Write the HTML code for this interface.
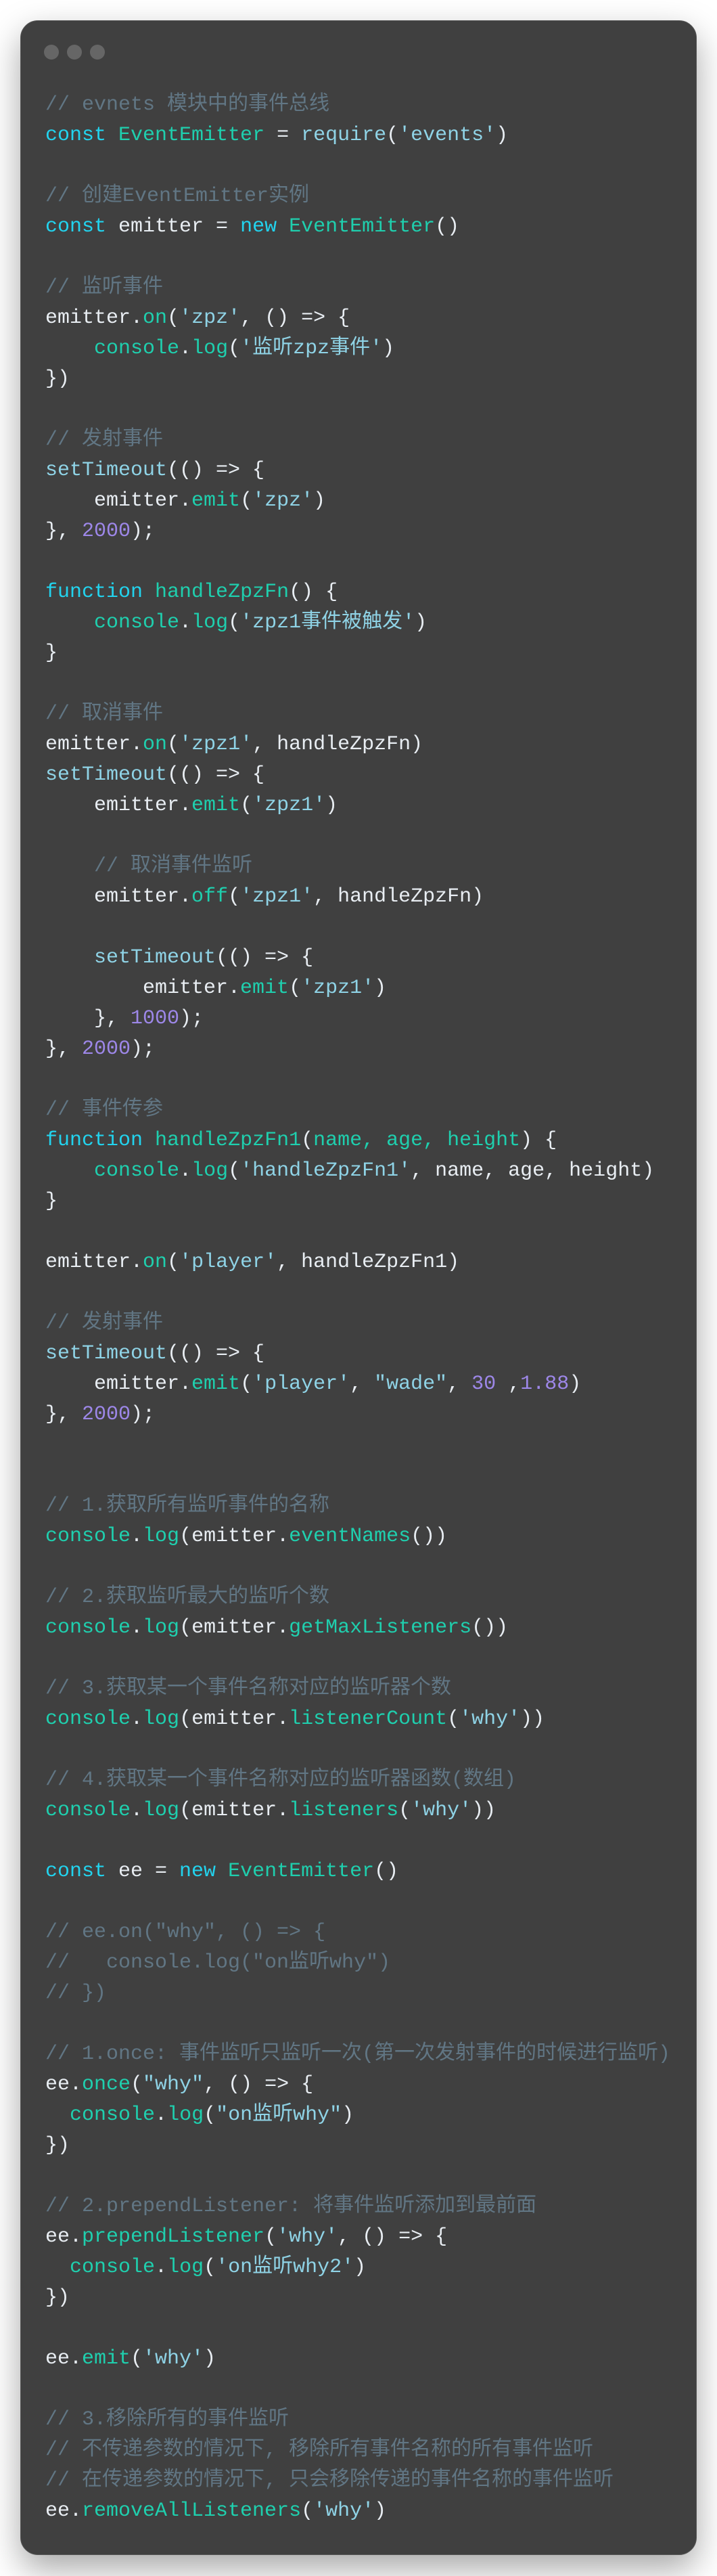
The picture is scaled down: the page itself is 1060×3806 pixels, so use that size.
<!DOCTYPE html>
<html><head><meta charset="utf-8"><style>
html,body{margin:0;padding:0;background:#fff;}
body{width:1060px;height:3806px;position:relative;overflow:hidden;}
.card{position:absolute;left:30px;top:30px;width:998px;height:3743px;background:#404040;border:1px solid #555;border-radius:26px;box-shadow:0 20px 50px rgba(0,0,0,0.35);}
.dot{position:absolute;top:35px;width:22px;height:22px;border-radius:50%;background:#666;}
pre{position:absolute;left:36px;top:102px;margin:0;font-family:"Liberation Mono","Noto Sans CJK SC",monospace;font-size:30px;line-height:45px;color:#e8edf2;white-space:pre;}
.c{color:#617684}.k{color:#22d3ee}.f{color:#1fcfae}.s{color:#8fd3e6}.n{color:#9d87e8}
</style></head><body>
<div class="card">
<div class="dot" style="left:34px"></div><div class="dot" style="left:68px"></div><div class="dot" style="left:102px"></div>
<pre><span class="c">// evnets 模块中的事件总线</span>
<span class="k">const</span> <span class="f">EventEmitter</span> = <span class="s">require</span>(<span class="s">'events'</span>)

<span class="c">// 创建EventEmitter实例</span>
<span class="k">const</span> emitter = <span class="k">new</span> <span class="f">EventEmitter</span>()

<span class="c">// 监听事件</span>
emitter.<span class="f">on</span>(<span class="s">'zpz'</span>, () =&gt; {
    <span class="f">console</span>.<span class="f">log</span>(<span class="s">'监听zpz事件'</span>)
})

<span class="c">// 发射事件</span>
<span class="s">setTimeout</span>(() =&gt; {
    emitter.<span class="f">emit</span>(<span class="s">'zpz'</span>)
}, <span class="n">2000</span>);

<span class="k">function</span> <span class="f">handleZpzFn</span>() {
    <span class="f">console</span>.<span class="f">log</span>(<span class="s">'zpz1事件被触发'</span>)
}

<span class="c">// 取消事件</span>
emitter.<span class="f">on</span>(<span class="s">'zpz1'</span>, handleZpzFn)
<span class="s">setTimeout</span>(() =&gt; {
    emitter.<span class="f">emit</span>(<span class="s">'zpz1'</span>)

    <span class="c">// 取消事件监听</span>
    emitter.<span class="f">off</span>(<span class="s">'zpz1'</span>, handleZpzFn)

    <span class="s">setTimeout</span>(() =&gt; {
        emitter.<span class="f">emit</span>(<span class="s">'zpz1'</span>)
    }, <span class="n">1000</span>);
}, <span class="n">2000</span>);

<span class="c">// 事件传参</span>
<span class="k">function</span> <span class="f">handleZpzFn1</span>(<span class="f">name, age, height</span>) {
    <span class="f">console</span>.<span class="f">log</span>(<span class="s">'handleZpzFn1'</span>, name, age, height)
}

emitter.<span class="f">on</span>(<span class="s">'player'</span>, handleZpzFn1)

<span class="c">// 发射事件</span>
<span class="s">setTimeout</span>(() =&gt; {
    emitter.<span class="f">emit</span>(<span class="s">'player'</span>, <span class="s">"wade"</span>, <span class="n">30</span> ,<span class="n">1.88</span>)
}, <span class="n">2000</span>);


<span class="c">// 1.获取所有监听事件的名称</span>
<span class="f">console</span>.<span class="f">log</span>(emitter.<span class="f">eventNames</span>())

<span class="c">// 2.获取监听最大的监听个数</span>
<span class="f">console</span>.<span class="f">log</span>(emitter.<span class="f">getMaxListeners</span>())

<span class="c">// 3.获取某一个事件名称对应的监听器个数</span>
<span class="f">console</span>.<span class="f">log</span>(emitter.<span class="f">listenerCount</span>(<span class="s">'why'</span>))

<span class="c">// 4.获取某一个事件名称对应的监听器函数(数组)</span>
<span class="f">console</span>.<span class="f">log</span>(emitter.<span class="f">listeners</span>(<span class="s">'why'</span>))

<span class="k">const</span> ee = <span class="k">new</span> <span class="f">EventEmitter</span>()

<span class="c">// ee.on("why", () =&gt; {</span>
<span class="c">//   console.log("on监听why")</span>
<span class="c">// })</span>

<span class="c">// 1.once: 事件监听只监听一次(第一次发射事件的时候进行监听)</span>
ee.<span class="f">once</span>(<span class="s">"why"</span>, () =&gt; {
  <span class="f">console</span>.<span class="f">log</span>(<span class="s">"on监听why"</span>)
})

<span class="c">// 2.prependListener: 将事件监听添加到最前面</span>
ee.<span class="f">prependListener</span>(<span class="s">'why'</span>, () =&gt; {
  <span class="f">console</span>.<span class="f">log</span>(<span class="s">'on监听why2'</span>)
})

ee.<span class="f">emit</span>(<span class="s">'why'</span>)

<span class="c">// 3.移除所有的事件监听</span>
<span class="c">// 不传递参数的情况下, 移除所有事件名称的所有事件监听</span>
<span class="c">// 在传递参数的情况下, 只会移除传递的事件名称的事件监听</span>
ee.<span class="f">removeAllListeners</span>(<span class="s">'why'</span>)</pre>
</div>
</body></html>
